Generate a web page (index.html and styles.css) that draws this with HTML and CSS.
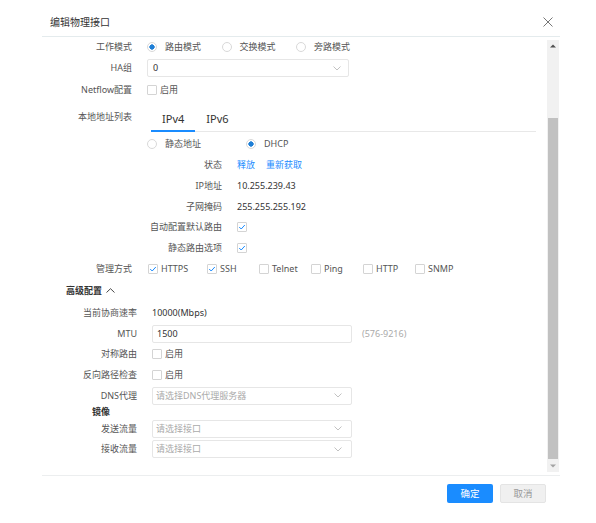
FILE: index.html
```html
<!DOCTYPE html>
<html lang="zh">
<head>
<meta charset="utf-8">
<title>编辑物理接口</title>
<link rel="stylesheet" href="styles.css">
</head>
<body>
<div class="dialog">
  <div class="header">
    <span class="title">编辑物理接口</span>
    <svg class="close" width="10" height="10" viewBox="0 0 10 10"><path d="M0.5 0.5 L9.5 9.5 M9.5 0.5 L0.5 9.5" stroke="#666" stroke-width="0.9" fill="none"/></svg>
  </div>
  <div class="body">
    <div class="content">
      <div class="row h20">
        <span class="lbl">工作模式</span>
        <span class="radio w-mode"><i class="on"></i>路由模式</span>
        <span class="radio w-mode"><i></i>交换模式</span>
        <span class="radio"><i></i>旁路模式</span>
      </div>
      <div class="row h22">
        <span class="lbl">HA组</span>
        <div class="select sel-ha"><span>0</span><svg width="8" height="5" viewBox="0 0 8 5"><path d="M0.5 0.5 L4 4 L7.5 0.5" stroke="#bbb" stroke-width="0.9" fill="none"/></svg></div>
      </div>
      <div class="row h22">
        <span class="lbl">Netflow配置</span>
        <span class="check"><i class="cb"></i>启用</span>
      </div>
      <div class="row tabrow">
        <span class="lbl lbl-top">本地地址列表</span>
        <div class="tabs">
          <span class="tab active">IPv4</span>
          <span class="tab">IPv6</span>
        </div>
      </div>
      <div class="row h23 indent">
        <span class="radio w-static"><i></i>静态地址</span>
        <span class="radio"><i class="on"></i>DHCP</span>
      </div>
      <div class="row">
        <span class="lbl lbl-in">状态</span>
        <a class="link">释放</a><a class="link">重新获取</a>
      </div>
      <div class="row">
        <span class="lbl lbl-in">IP地址</span>
        <span class="val">10.255.239.43</span>
      </div>
      <div class="row">
        <span class="lbl lbl-in">子网掩码</span>
        <span class="val">255.255.255.192</span>
      </div>
      <div class="row">
        <span class="lbl lbl-in">自动配置默认路由</span>
        <span class="check"><i class="cb"><svg width="8" height="8" viewBox="0 0 8 8"><path d="M1.2 4 L3.2 6 L6.8 2" stroke="#1a8cff" stroke-width="1" fill="none"/></svg></i></span>
      </div>
      <div class="row">
        <span class="lbl lbl-in">静态路由选项</span>
        <span class="check"><i class="cb"><svg width="8" height="8" viewBox="0 0 8 8"><path d="M1.2 4 L3.2 6 L6.8 2" stroke="#1a8cff" stroke-width="1" fill="none"/></svg></i></span>
      </div>
      <div class="row">
        <span class="lbl">管理方式</span>
        <span class="check mg mg-first"><i class="cb"><svg width="8" height="8" viewBox="0 0 8 8"><path d="M1.2 4 L3.2 6 L6.8 2" stroke="#1a8cff" stroke-width="1" fill="none"/></svg></i>HTTPS</span>
        <span class="check mg"><i class="cb"><svg width="8" height="8" viewBox="0 0 8 8"><path d="M1.2 4 L3.2 6 L6.8 2" stroke="#1a8cff" stroke-width="1" fill="none"/></svg></i>SSH</span>
        <span class="check mg"><i class="cb"></i>Telnet</span>
        <span class="check mg"><i class="cb"></i>Ping</span>
        <span class="check mg"><i class="cb"></i>HTTP</span>
        <span class="check"><i class="cb"></i>SNMP</span>
      </div>
      <div class="adv-head">
        <span>高级配置</span>
        <svg width="9" height="5" viewBox="0 0 9 5"><path d="M0.5 4.5 L4.5 0.7 L8.5 4.5" stroke="#333" stroke-width="0.9" fill="none"/></svg>
      </div>
      <div class="row">
        <span class="lbl lbl-adv">当前协商速率</span>
        <span class="val">10000(Mbps)</span>
      </div>
      <div class="row">
        <span class="lbl lbl-adv">MTU</span>
        <div class="input">1500</div>
        <span class="hint">(576-9216)</span>
      </div>
      <div class="row">
        <span class="lbl lbl-adv">对称路由</span>
        <span class="check"><i class="cb"></i>启用</span>
      </div>
      <div class="row">
        <span class="lbl lbl-adv">反向路径检查</span>
        <span class="check"><i class="cb"></i>启用</span>
      </div>
      <div class="row">
        <span class="lbl lbl-adv">DNS代理</span>
        <div class="select sel-adv"><span class="ph">请选择DNS代理服务器</span><svg width="8" height="5" viewBox="0 0 8 5"><path d="M0.5 0.5 L4 4 L7.5 0.5" stroke="#bbb" stroke-width="0.9" fill="none"/></svg></div>
      </div>
      <div class="sub-head">镜像</div>
      <div class="row">
        <span class="lbl lbl-adv">发送流量</span>
        <div class="select sel-adv"><span class="ph">请选择接口</span><svg width="8" height="5" viewBox="0 0 8 5"><path d="M0.5 0.5 L4 4 L7.5 0.5" stroke="#bbb" stroke-width="0.9" fill="none"/></svg></div>
      </div>
      <div class="row">
        <span class="lbl lbl-adv">接收流量</span>
        <div class="select sel-adv"><span class="ph">请选择接口</span><svg width="8" height="5" viewBox="0 0 8 5"><path d="M0.5 0.5 L4 4 L7.5 0.5" stroke="#bbb" stroke-width="0.9" fill="none"/></svg></div>
      </div>
    </div>
    <div class="scrollbar">
      <div class="sb-arrow"><svg width="6" height="4" viewBox="0 0 6 4"><path d="M0 3.5 L3 0.5 L6 3.5 Z" fill="#505050"/></svg></div>
      <div class="sb-track"><div class="sb-thumb"></div></div>
      <div class="sb-arrow"><svg width="6" height="4" viewBox="0 0 6 4"><path d="M0 0.5 L3 3.5 L6 0.5 Z" fill="#a3a3a3"/></svg></div>
    </div>
  </div>
  <div class="footer">
    <span class="btn primary">确定</span>
    <span class="btn default">取消</span>
  </div>
</div>
</body>
</html>
```

FILE: styles.css
```css
* { box-sizing: border-box; }
html, body { margin: 0; padding: 0; background: #fff; }
body {
  font-family: "Noto Sans", "Noto Sans CJK SC", sans-serif;
  font-size: 9px;
  line-height: 12px;
  color: #333;
  width: 596px;
  height: 523px;
  overflow: hidden;
}
.dialog { margin-left: 42px; width: 518px; }
.header {
  height: 37px;
  border-bottom: 1px solid #e4ebed;
  display: flex;
  align-items: center;
  justify-content: space-between;
  padding: 8px 7px 0 8px;
}
.title { font-size: 10px; line-height: 14px; color: #333; }
.body { display: flex; height: 438px; }
.content { flex: 1; overflow: hidden; }
.scrollbar {
  width: 12px;
  margin: 3px 1px 3px 0;
  background: #f1f1f1;
  display: flex;
  flex-direction: column;
}
.sb-arrow { height: 12px; display: flex; align-items: center; justify-content: center; }
.sb-track { flex: 1; display: flex; flex-direction: column; justify-content: flex-end; padding: 0 1px 1px; }
.sb-thumb { height: 341px; background: #c1c1c1; }
.footer {
  border-top: 1px solid #eceeef;
  display: flex;
  justify-content: flex-end;
  gap: 7px;
  padding: 8px 14px 0 0;
}
.btn {
  width: 46px; height: 19px;
  font-size: 9.5px;
  border-radius: 2px;
  display: flex; align-items: center; justify-content: center;
}
.primary { background: #1a8cff; color: #fff; }
.default { background: #f0f0f0; border: 1px solid #e4e4e4; color: #999; }

.row { display: flex; align-items: center; height: 20.7px; }
.h20 { height: 20px; }
.h22 { height: 22px; }
.h23 { height: 23px; }
.lbl { width: 90px; flex-shrink: 0; text-align: right; margin-right: 15px; color: #555; white-space: nowrap; }
.lbl-in { width: 180px; }
.lbl-adv { width: 95px; }
.lbl-top { align-self: flex-start; padding-top: 10px; }
.indent { padding-left: 105px; }
.val { color: #333; }
.link { color: #1a8cff; margin-right: 11px; }

.radio { display: inline-flex; align-items: center; color: #555; }
.radio i {
  width: 10px; height: 10px;
  border: 1px solid #d9d9d9;
  border-radius: 50%;
  margin-right: 8px;
  background: #fff;
}
.radio i.on { background: radial-gradient(circle, #1f7fd6 0, #1f7fd6 2.4px, #fff 2.9px); }
.w-mode { width: 74.5px; }
.w-static { width: 99px; }

.check { display: inline-flex; align-items: center; color: #555; }
.cb {
  width: 10px; height: 10px;
  border: 1px solid #d4d4d4;
  border-radius: 1px;
  margin-right: 3px;
  display: inline-flex; align-items: center; justify-content: center;
  background: #fff;
}
.mg { width: 52px; }
.mg-first { width: 59px; margin-left: 1px; }

.select, .input {
  height: 18px;
  border: 1px solid #e6e6e6;
  border-radius: 2px;
  display: flex; align-items: center; justify-content: space-between;
}
.sel-ha { width: 202px; padding: 0 7px 0 5px; }
.sel-adv { width: 200px; padding: 0 9px 0 3px; }
.input { width: 200px; padding: 0 4px; }
.ph { color: #aaa; }
.hint { color: #aaa; margin-left: 10px; }

.tabrow { height: 31px; align-items: flex-start; }
.tabs {
  margin-left: 4px;
  width: 385px;
  height: 31px;
  border-bottom: 1px solid #e8e8e8;
  display: flex;
}
.tab {
  height: 30px;
  padding: 11px 11px 0;
  font-size: 11px;
  line-height: 14px;
  color: #333;
}
.tab.active { border-bottom: 2px solid #1a8cff; height: 31px; }

.adv-head {
  height: 23.6px;
  padding-left: 24px;
  display: flex; align-items: center; gap: 4px;
  font-weight: bold; color: #333;
}
.sub-head { height: 12px; padding-left: 50px; font-weight: bold; color: #333; line-height: 12px; }
```
